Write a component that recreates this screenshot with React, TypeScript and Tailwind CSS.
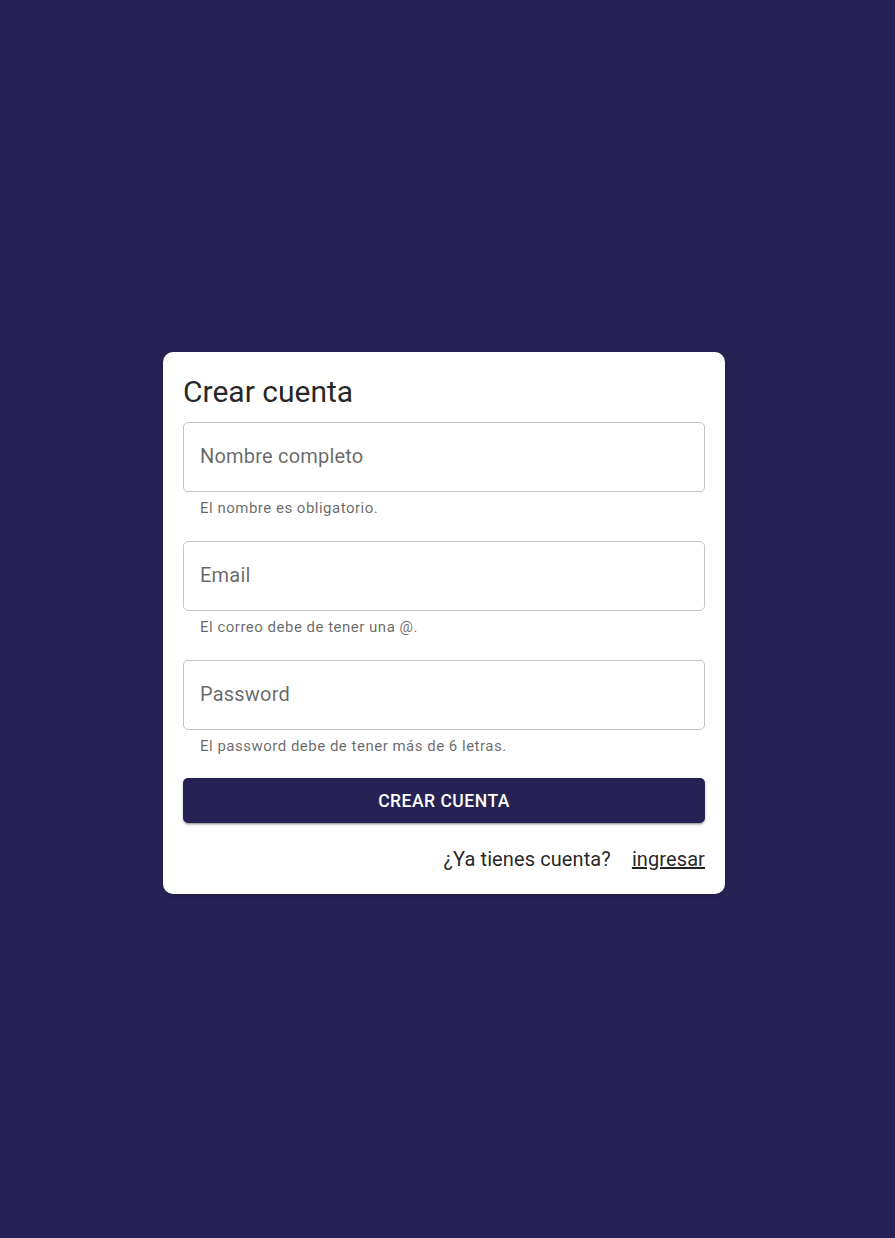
import React from 'react';

const fields = [
  { label: 'Nombre completo', helper: 'El nombre es obligatorio.' },
  { label: 'Email', helper: 'El correo debe de tener una @.' },
  { label: 'Password', helper: 'El password debe de tener más de 6 letras.' },
];

export default function App() {
  return (
    <div
      className="min-h-screen w-full bg-[#262254] flex items-center justify-center pr-[7px] pt-[7px]"
      style={{ fontFamily: 'Roboto, "Liberation Sans", sans-serif' }}
    >
      <div className="w-[562px] bg-white rounded-[10px] p-5 shadow-[0_2px_4px_rgba(0,0,0,0.2)]">
        <h1 className="text-[30px] leading-[40px] text-black/[0.87] font-normal mb-[10px]">Crear cuenta</h1>

        <div className="flex flex-col gap-5 mb-[19px]">
          {fields.map((f) => (
            <div key={f.label}>
              <div className="h-[70px] rounded-[5px] border border-[#c4c4c4] flex items-center px-[16px] pb-[2px]">
                <span className="text-[20px] text-black/60 tracking-[0.01em]">{f.label}</span>
              </div>
              <p className="mt-[4px] mx-[17px] text-[15px] leading-[25px] text-black/60 tracking-[0.0333em]">{f.helper}</p>
            </div>
          ))}
        </div>

        <button className="w-full h-[45px] pt-[2px] rounded-[5px] bg-[#262254] text-white text-[17.5px] font-medium uppercase tracking-[0.02857em] shadow-[0_3px_1px_-2px_rgba(0,0,0,0.2),0_2px_2px_0_rgba(0,0,0,0.14),0_1px_5px_0_rgba(0,0,0,0.12)]">
          Crear cuenta
        </button>

        <div className="mt-5 h-[31px] pt-[2px] flex items-center justify-end gap-[21px] text-[20px] tracking-[0.005em] text-black/[0.87]">
          <span>¿Ya tienes cuenta?</span>
          <a className="underline cursor-pointer">ingresar</a>
        </div>
      </div>
    </div>
  );
}
